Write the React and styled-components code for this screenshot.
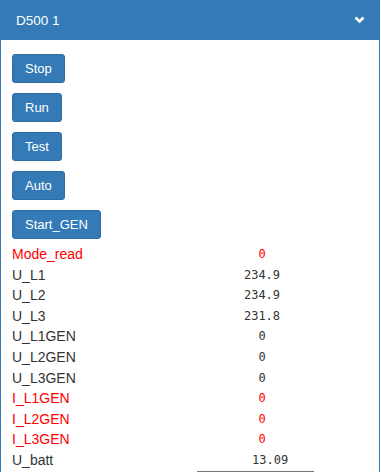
import React from "react";
import styled, { createGlobalStyle } from "styled-components";

const Global = createGlobalStyle`
  html, body { margin: 0; padding: 0; background: #fff; }
  body { font-family: "Liberation Sans", Arial, sans-serif; color: #333; }
`;

const Panel = styled.div`
  width: 380px;
  box-sizing: border-box;
  border-left: 1px solid #337ab7;
  border-right: 1px solid #337ab7;
  min-height: 472px;
`;

const Header = styled.div`
  height: 40px;
  background: #337ab7;
  color: #fff;
  display: flex;
  align-items: center;
  justify-content: space-between;
  padding: 0 14px 0 15px;
  font-size: 13.5px;
`;

const Body = styled.div`
  padding: 14px 0 0 11px;
`;

const Buttons = styled.div`
  display: flex;
  flex-direction: column;
  align-items: flex-start;
  gap: 10px;
  margin-bottom: 5px;
`;

const Button = styled.button`
  height: 29px;
  padding: 0 12px;
  font-family: "Liberation Sans", Arial, sans-serif;
  font-size: 13px;
  color: #fff;
  background: #337ab7;
  border: 1px solid #2e6da4;
  border-radius: 3px;
  cursor: pointer;
`;

const Row = styled.div`
  display: grid;
  grid-template-columns: 185px 130px;
  align-items: start;
  line-height: 20.6px;
  color: ${(p) => (p.$red ? "#f00" : "#333")};
`;

const Label = styled.div`
  font-size: 14px;
`;

const Value = styled.div`
  font-family: "DejaVu Sans Mono", "Liberation Mono", monospace;
  font-size: 12px;
  text-align: center;
`;

const Batt = styled.div`
  width: 117px;
  box-sizing: border-box;
  padding: 0 0 0 55px;
  border-bottom: 1px solid #777;
  font-family: "DejaVu Sans Mono", "Liberation Mono", monospace;
  font-size: 12px;
`;

const Chevron = () => (
  <svg width="11" height="8" viewBox="0 0 11 8">
    <path d="M1.5 1.5 L5.5 5.5 L9.5 1.5" fill="none" stroke="#fff" strokeWidth="2.6" />
  </svg>
);

const rows = [
  ["Mode_read", "0", true],
  ["U_L1", "234.9"],
  ["U_L2", "234.9"],
  ["U_L3", "231.8"],
  ["U_L1GEN", "0"],
  ["U_L2GEN", "0"],
  ["U_L3GEN", "0"],
  ["I_L1GEN", "0", true],
  ["I_L2GEN", "0", true],
  ["I_L3GEN", "0", true],
];

export default function App() {
  return (
    <>
      <Global />
      <Panel>
        <Header>
          <span>D500 1</span>
          <Chevron />
        </Header>
        <Body>
          <Buttons>
            {["Stop", "Run", "Test", "Auto", "Start_GEN"].map((b) => (
              <Button key={b}>{b}</Button>
            ))}
          </Buttons>
          {rows.map(([l, v, r]) => (
            <Row key={l} $red={r}>
              <Label>{l}</Label>
              <Value>{v}</Value>
            </Row>
          ))}
          <Row>
            <Label>U_batt</Label>
            <Batt>13.09</Batt>
          </Row>
        </Body>
      </Panel>
    </>
  );
}
